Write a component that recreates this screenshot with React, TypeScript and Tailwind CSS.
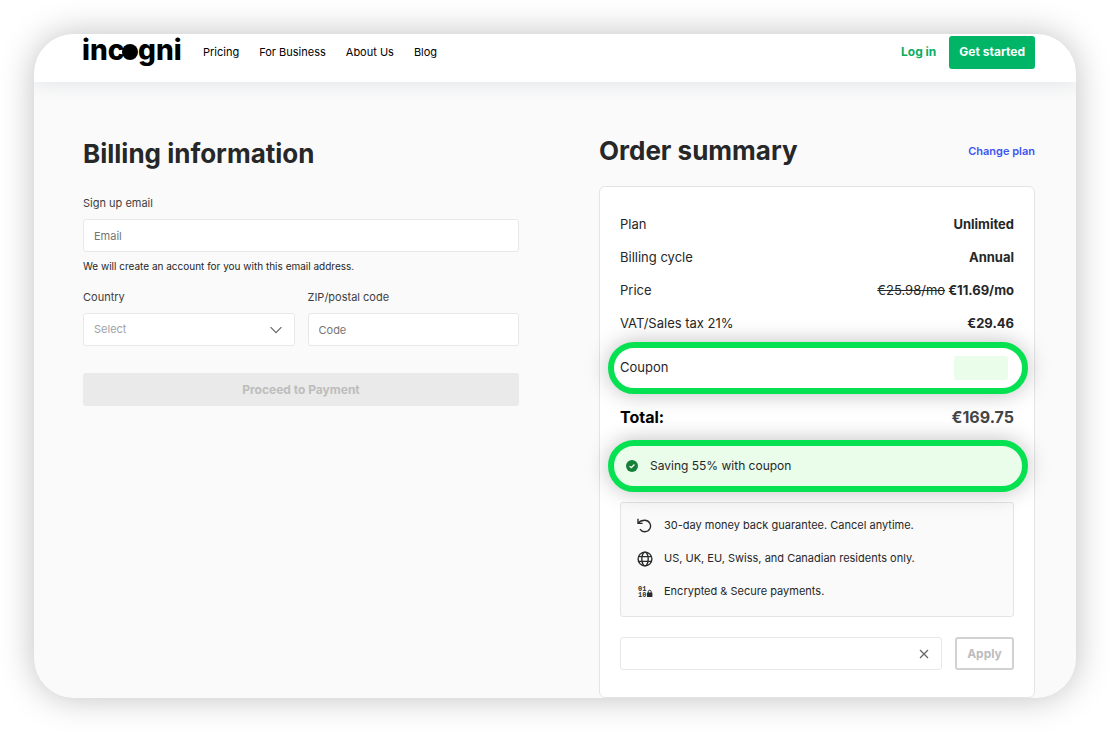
import type { ReactNode } from 'react';

interface SummaryRowProps {
    label: string;
    children: ReactNode;
}

interface PerkProps {
    icon: ReactNode;
    children: ReactNode;
}

const navLinks = ['Pricing', 'For Business', 'About Us', 'Blog'];

const fieldClass = 'h-[33px] w-full rounded-[3px] border border-[#e8e8e8] bg-white px-2.5 text-[11px] text-[#333] placeholder:text-[#757575] outline-none focus:border-[#00b566]';
const labelClass = 'mb-1.5 block text-[11px] leading-5 text-[#404041]';

const Logo = () => (
    <svg viewBox="0 0 100 36" className="h-9 w-[100px] overflow-visible" fill="#000" role="img" aria-label="incogni">
        <text x="-1" y="26" fontFamily="Inter, sans-serif" fontWeight="800" fontSize="28">inc</text>
        <circle cx="47" cy="18" r="8" />
        <text x="55" y="26" fontFamily="Inter, sans-serif" fontWeight="800" fontSize="28">gni</text>
    </svg>
);

const ChevronDown = () => (
    <svg viewBox="0 0 12 8" className="pointer-events-none absolute top-1/2 right-[13px] h-2 w-3 -translate-y-1/2" fill="none" stroke="#666" strokeWidth="1.2">
        <path d="M.6 1.2 6 6.6l5.4-5.4" />
    </svg>
);

const CheckBadge = () => (
    <svg viewBox="0 0 12 12" className="h-3 w-3" fill="none">
        <circle cx="6" cy="6" r="6" fill="#168039" />
        <path d="m3.6 6.1 1.7 1.6 3.1-3.2" stroke="#fff" strokeWidth="1.3" />
    </svg>
);

const UndoIcon = () => (
    <svg viewBox="0 0 15 15" className="h-[15px] w-[15px]" fill="none" stroke="#2a2b2c" strokeWidth="1.4">
        <path d="M1 .8v4.6h4.6" />
        <path d="M1.3 5.200C3 2.900 5.200 2.200 7.800 2.200a5.800 5.800 0 1 1-4.900 9" />
    </svg>
);

const GlobeIcon = () => (
    <svg viewBox="0 0 16 16" className="h-4 w-4 shrink-0" fill="none" stroke="#2a2b2c" strokeWidth="1.4">
        <circle cx="8" cy="8" r="6.900" />
        <ellipse cx="8" cy="8" rx="3.200" ry="6.900" />
        <path d="M1.700 5.600h12.600M1.700 10.400h12.600" />
    </svg>
);

const BinaryLockIcon = () => (
    <svg viewBox="0 0 16 14" className="h-3.5 w-4 shrink-0" fill="#2a2b2c">
        <text x="1" y="6" fontFamily="Liberation Mono, monospace" fontWeight="700" fontSize="7">01</text>
        <text x="1" y="12" fontFamily="Liberation Mono, monospace" fontWeight="700" fontSize="7">10</text>
        <rect x="10" y="7.500" width="5.400" height="4.500" rx=".6" />
        <path d="M11.300 8V6.600a1.400 1.400 0 0 1 2.800 0V8" fill="none" stroke="#2a2b2c" />
    </svg>
);

const CloseIcon = () => (
    <svg viewBox="0 0 10 10" className="h-2.5 w-2.5" fill="none" stroke="#666" strokeWidth="1.2">
        <path d="m1 1 8 8M9 1 1 9" />
    </svg>
);

const SummaryRow = ({ label, children }: SummaryRowProps) => (
    <div className="flex h-[33px] items-center justify-between text-[13px]">
        <dt>{label}</dt>
        <dd className="font-bold">{children}</dd>
    </div>
);

const Perk = ({ icon, children }: PerkProps) => (
    <li className="flex h-[33px] items-center gap-3">
        <span className="flex w-[15px] justify-center">{icon}</span>
        {children}
    </li>
);

function Header() {
    return (
        <header className="relative flex h-12 items-center justify-between bg-white pr-[41px] pb-3 pl-[49px] shadow-[0_2px_18px_rgba(50,70,110,0.12)]">
            <div className="flex items-center gap-5">
                <a href="#"><Logo /></a>
                <nav className="flex items-center gap-5 text-[11px] text-black">
                    {navLinks.map((name) => (
                        <a key={name} href="#" className="hover:underline">{name}</a>
                    ))}
                </nav>
            </div>
            <div className="flex items-center gap-[13px] text-xs font-bold">
                <a href="#" className="text-[#0aae62]">Log in</a>
                <button type="button" className="h-[33px] rounded-[3px] bg-[#00b566] px-2.5 text-white">Get started</button>
            </div>
        </header>
    );
}

function BillingForm() {
    return (
        <form className="pt-[52px]">
            <h2 className="mb-[19px] text-[26px] leading-10 font-bold">Billing information</h2>
            <label htmlFor="email" className={labelClass}>Sign up email</label>
            <input id="email" type="email" placeholder="Email" className={fieldClass} />
            <p className="mt-1 text-[10px] leading-5">We will create an account for you with this email address.</p>
            <div className="mt-[11px] grid grid-cols-2 gap-[13px]">
                <div>
                    <label htmlFor="country" className={labelClass}>Country</label>
                    <div className="relative">
                        <select id="country" className={`${fieldClass} appearance-none text-[#a0a1a6]`}>
                            <option>Select</option>
                        </select>
                        <ChevronDown />
                    </div>
                </div>
                <div>
                    <label htmlFor="zip" className={labelClass}>ZIP/postal code</label>
                    <input id="zip" type="text" placeholder="Code" className={fieldClass} />
                </div>
            </div>
            <button type="submit" disabled className="mt-[27px] h-[33px] w-full rounded-[3px] bg-[#eaeaea] text-xs font-bold text-[#bdbdbd]">
                Proceed to Payment
            </button>
        </form>
    );
}

function OrderSummary() {
    return (
        <section className="pt-[49px]">
            <div className="flex items-center justify-between">
                <h2 className="text-[26px] leading-10 font-bold">Order summary</h2>
                <a href="#" className="text-[11px] font-semibold text-[#3d55f5]">Change plan</a>
            </div>
            <div className="mt-[15px] rounded-md border border-[#e4e4e4] bg-white px-5 pt-[21px] pb-[27px]">
                <dl>
                    <SummaryRow label="Plan">Unlimited</SummaryRow>
                    <SummaryRow label="Billing cycle">Annual</SummaryRow>
                    <SummaryRow label="Price">
                        <s className="font-normal">€25.98/mo</s> €11.69/mo
                    </SummaryRow>
                    <SummaryRow label="VAT/Sales tax 21%">€29.46</SummaryRow>
                    <div className="relative -mr-3.5 -ml-3 mt-0.5 flex h-[52px] items-center justify-between rounded-full border-6 border-[#05e151] bg-white pr-3.5 pl-1.5 text-[13px] shadow-[0_0_22px_rgba(0,0,0,0.25)]">
                        <dt>Coupon</dt>
                        <dd className="h-6 w-[54px] rounded-[3px] bg-[#eafcea]" />
                    </div>
                    <div className="relative flex h-[46px] items-center justify-between text-base font-bold">
                        <dt className="text-black">Total:</dt>
                        <dd className="text-[#454546]">€169.75</dd>
                    </div>
                </dl>
                <p className="relative -mr-3.5 -ml-3 flex h-[52px] items-center gap-3 rounded-full border-6 border-[#05e151] bg-[#eafcea] pl-3 text-xs shadow-[0_0_22px_rgba(0,0,0,0.25)]">
                    <CheckBadge />
                    Saving 55% with coupon
                </p>
                <ul className="mt-2.5 rounded-[3px] border border-[#e4e4e4] bg-[#fafafa] px-4 pt-1.5 pb-2 text-[11px]">
                    <Perk icon={<UndoIcon />}>30-day money back guarantee. Cancel anytime.</Perk>
                    <Perk icon={<GlobeIcon />}>US, UK, EU, Swiss, and Canadian residents only.</Perk>
                    <Perk icon={<BinaryLockIcon />}>Encrypted &amp; Secure payments.</Perk>
                </ul>
                <form className="mt-5 flex gap-[13px]">
                    <div className="relative grow">
                        <input type="text" aria-label="Coupon code" className={fieldClass} />
                        <button type="button" aria-label="Clear" className="absolute top-1/2 right-[13px] -translate-y-1/2">
                            <CloseIcon />
                        </button>
                    </div>
                    <button type="submit" disabled className="h-[33px] w-[59px] rounded-[3px] border-2 border-[#d2d2d2] text-xs font-bold text-[#bdbdbd]">
                        Apply
                    </button>
                </form>
            </div>
        </section>
    );
}

export default function App() {
    return (
        <div className="min-h-screen bg-white p-[34px] font-[Inter,sans-serif] text-[#262728]">
            <div className="overflow-hidden rounded-[40px] bg-[#fafafa] shadow-[0_0_34px_rgba(0,0,0,0.25)]">
                <Header />
                <main className="grid grid-cols-2 gap-20 pr-[41px] pl-[49px]">
                    <BillingForm />
                    <OrderSummary />
                </main>
            </div>
        </div>
    );
}
